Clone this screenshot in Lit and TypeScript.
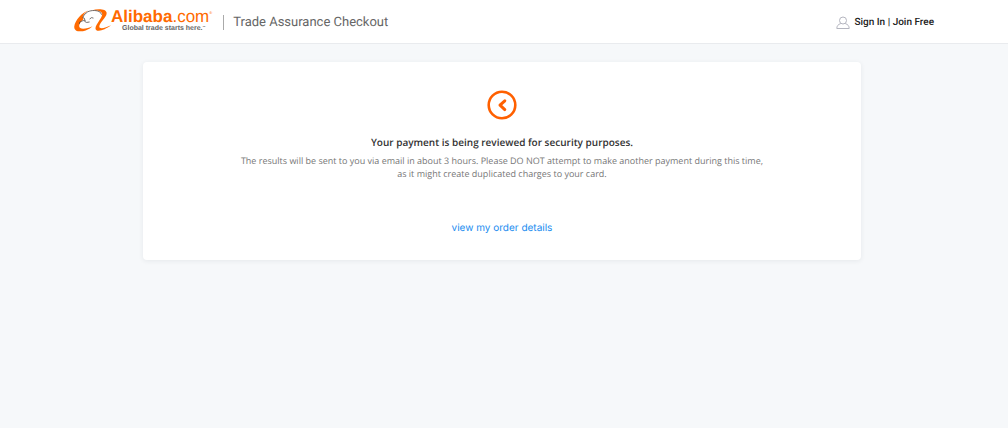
import { LitElement, html, css } from "lit";
import { customElement } from "lit/decorators.js";

@customElement("brand-logo")
class BrandLogo extends LitElement {
  static styles = css`
    :host { display: block; padding-bottom: 4px; }
    .brand { display: flex; color: #ff6a00; text-decoration: none; font-family: "Liberation Sans", Arial, sans-serif; }
    .mark { width: 37px; height: 24px; flex: none; }
    .words { display: flex; flex-direction: column; }
    .name { display: flex; font-size: 17px; line-height: 16px; }
    .name b { font-weight: 700; }
    .reg { font-size: 4px; line-height: 8px; }
    .tagline { font-size: 7px; line-height: 7px; font-weight: 700; color: #666; padding-left: 11px; white-space: nowrap; }
    .tm { font-size: 3px; vertical-align: top; line-height: 4px; }
  `;
  render() {
    return html`<a class="brand" href="#" aria-label="Alibaba.com home">
      <svg class="mark" viewBox="0 0 38 25" preserveAspectRatio="none" aria-hidden="true">
        <path fill="#ff6a00" d="M15 1.5C8 3.5 1 12 .3 18C-.3 24 7 24 12 22.300C15 21.300 17 20 19 18C14 20.500 5 22.500 5.300 17.500C5.500 14.500 8 12 9.500 11L9 8C10 5 12 3 15 1.500Z"/>
        <path fill="#ff6a00" d="M18 1.500C25 -.5 33 0 33.500 4C34 8.500 26 14 26 18.500C26.200 21.500 33 19.500 38 17C32 21.500 25 24.500 22.500 21.500C20 18 29 10 29 5.500C29 2 23 1 18 1.500Z"/>
        <path fill="none" stroke="#4d4644" stroke-width=".8" stroke-linejoin="round" d="M5.500 15.500L6 13.500L9.500 12L11.500 12.500L10.500 9.500L9 9L10.500 6L14 3C18 1 24 1 27 3.500L28.500 6M11 13L13 14L16 13.500M16 10.500L18 9L20 9.500"/>
      </svg>
      <span class="words">
        <span class="name"><b>Alibaba</b><span>.com</span><span class="reg">®</span></span>
        <span class="tagline">Global trade starts here.<span class="tm">™</span></span>
      </span>
    </a>`;
  }
}

@customElement("app-root")
class AppRoot extends LitElement {
  static styles = css`
    :host { display: block; min-height: 100vh; background: #f6f8fa; font-family: "Open Sans", sans-serif; text-rendering: geometricPrecision; }
    .bar { background: #fff; border-bottom: 1px solid #e9ebee; }
    .inner { box-sizing: border-box; height: 43px; padding-top: 2px; max-width: 860px; margin: 0 auto; display: flex; align-items: center; font-family: Roboto, sans-serif; }
    .title { margin: 0 0 0 11px; padding-left: 9px; border-left: 1px solid #aaa; font-size: 13px; line-height: 15px; font-weight: 400; color: #666; }
    .account { margin-left: auto; display: flex; align-items: center; gap: 4px; font-size: 10px; line-height: 14px; font-weight: 500; color: #222; }
    .account a { color: inherit; text-decoration: none; }
    .user { width: 14px; height: 14px; }
    .card { box-sizing: border-box; width: 71.2%; margin: 18px 0 0 14.2%; padding: 28px 24px 25px; background: #fff; border-radius: 4px; box-shadow: 0 1px 5px rgba(40, 50, 70, 0.08); display: flex; flex-direction: column; align-items: center; text-align: center; }
    .status { width: 30px; height: 30px; }
    .heading { margin: 14px 0 0; font-size: 10px; line-height: 16px; font-weight: 600; color: #333; }
    .text { margin: 4px 0 0; font-size: 9px; line-height: 13px; color: #777; }
    .text span { display: block; }
    .link { margin-top: 41px; font-family: Inter, "Liberation Sans", sans-serif; font-size: 10px; line-height: 14px; color: #1a8cef; text-decoration: none; }
  `;
  render() {
    return html`
      <header class="bar">
        <div class="inner">
          <brand-logo></brand-logo>
          <h1 class="title">Trade Assurance Checkout</h1>
          <nav class="account" aria-label="Account">
            <svg class="user" viewBox="0 0 14 14" fill="none" stroke="#b4b5bf" aria-hidden="true">
              <circle cx="7" cy="4.5" r="3.5"/><path d="M4.8 7.5C2 8.5.8 10 .8 12.5H13.2C13.2 10 12 8.5 9.2 7.5"/>
            </svg>
            <span><a href="#">Sign In</a> | <a href="#">Join Free</a></span>
          </nav>
        </div>
      </header>
      <main class="card">
        <svg class="status" viewBox="0 0 30 30" fill="none" stroke="#ff6000" aria-hidden="true">
          <circle cx="15" cy="15" r="13.3" stroke-width="2.6"/>
          <path d="M17.8 10.800L13 15.200L17.800 19.600" stroke-width="3" stroke-linecap="round" stroke-linejoin="round"/>
        </svg>
        <h2 class="heading">Your payment is being reviewed for security purposes.</h2>
        <p class="text">
          <span>The results will be sent to you via email in about 3 hours. Please DO NOT attempt to make another payment during this time,</span>
          <span>as it might create duplicated charges to your card.</span>
        </p>
        <a class="link" href="#">view my order details</a>
      </main>
    `;
  }
}
